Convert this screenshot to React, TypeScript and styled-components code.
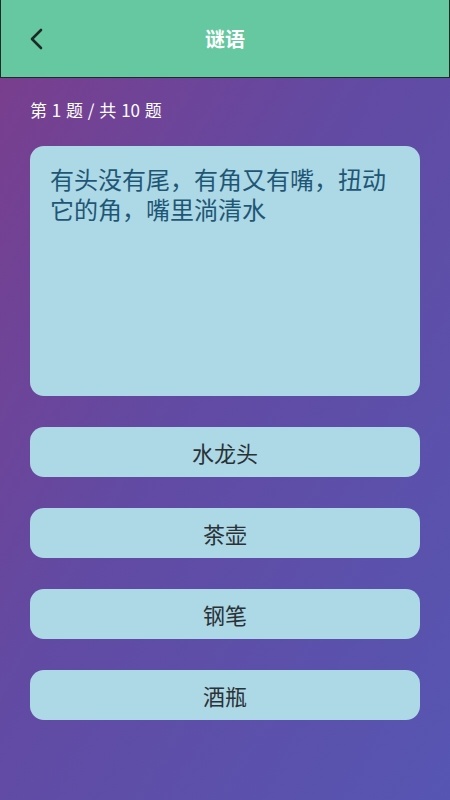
import React from 'react'
import styled, { createGlobalStyle } from 'styled-components'

const GlobalStyles = createGlobalStyle`
  html, body {
    margin: 0;
    padding: 0;
    height: 100%;
  }
  body {
    font-family: "Noto Sans CJK SC", "Noto Sans", sans-serif;
  }
  #root {
    min-height: 100%;
  }
`

const Page = styled.div`
  width: 450px;
  height: 800px;
  display: flex;
  flex-direction: column;
  background: linear-gradient(120deg, #7c3d8b 0%, #624aa3 45%, #5656b2 100%);
  overflow: hidden;
`

const Header = styled.header`
  height: 78px;
  box-sizing: border-box;
  background: #66c8a0;
  border: 1.5px solid #1f2b27;
  border-top: none;
  display: flex;
  align-items: center;
  position: relative;
`

const BackButton = styled.button`
  position: absolute;
  left: 22px;
  top: 50%;
  transform: translateY(-50%);
  background: none;
  border: none;
  padding: 4px;
  display: flex;
  align-items: center;
  cursor: pointer;
`

const Title = styled.h1`
  flex: 1;
  margin: 0;
  text-align: center;
  color: #ffffff;
  font-size: 20px;
  font-weight: 700;
`

const Content = styled.main`
  display: flex;
  flex-direction: column;
  padding: 18px 30px 0;
`

const Progress = styled.div`
  color: #ffffff;
  font-size: 17px;
  line-height: 28px;
  margin-bottom: 22px;
  word-spacing: 1px;
`

const QuestionCard = styled.div`
  height: 250px;
  box-sizing: border-box;
  background: #add8e6;
  border-radius: 14px;
  padding: 18px 20px;
  color: #1e5775;
  font-size: 24px;
  line-height: 30px;
  margin-bottom: 31px;
`

const Options = styled.div`
  display: flex;
  flex-direction: column;
  gap: 31px;
`

const Option = styled.button`
  height: 50px;
  border: none;
  border-radius: 14px;
  background: #add8e6;
  color: #2a3236;
  font-family: "Noto Sans CJK SC", "Noto Sans", sans-serif;
  font-size: 22px;
  cursor: pointer;
`

const options = ['水龙头', '茶壶', '钢笔', '酒瓶']

const App = () => (
  <Page>
    <GlobalStyles />
    <Header>
      <BackButton aria-label="返回">
        <svg width="20" height="24" viewBox="0 0 20 24" fill="none">
          <path d="M14 3 L5 12 L14 21" stroke="#1d2a26" strokeWidth="2.6" strokeLinecap="round" strokeLinejoin="round" />
        </svg>
      </BackButton>
      <Title>谜语</Title>
    </Header>
    <Content>
      <Progress>第 1 题 / 共 10 题</Progress>
      <QuestionCard>有头没有尾，有角又有嘴，扭动它的角，嘴里淌清水</QuestionCard>
      <Options>
        {options.map((o) => (
          <Option key={o}>{o}</Option>
        ))}
      </Options>
    </Content>
  </Page>
)

export default App
